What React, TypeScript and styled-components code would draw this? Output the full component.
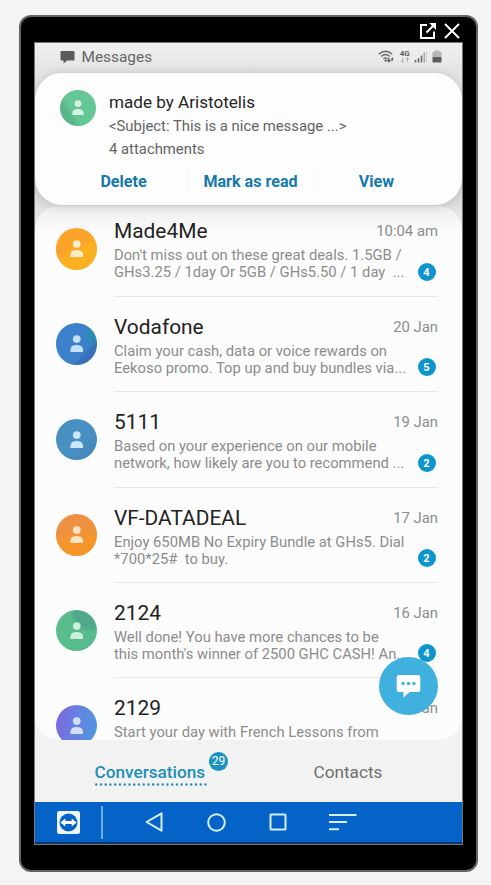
import React from 'react';
import styled, { createGlobalStyle } from 'styled-components';

const GlobalStyle = createGlobalStyle`
  *, *::before, *::after { box-sizing: border-box; }
  body {
    margin: 0;
    background: #f4f4f4;
    font-family: Roboto, "Liberation Sans", sans-serif;
    overflow: hidden;
  }
`;

const Page = styled.main`
  height: 885px;
  padding: 15px 0 0 19px;
`;

const Device = styled.div`
  display: flex;
  flex-direction: column;
  width: 459px;
  height: 857px;
  padding: 0 13px;
  background: #000;
  border: 2px solid #646464;
  border-radius: 12px;
`;

const WindowBar = styled.div`
  display: flex;
  justify-content: flex-end;
  align-items: flex-start;
  flex: none;
  height: 25px;
  padding: 5px 3px 0 0;
`;

const Screen = styled.div`
  position: relative;
  display: flex;
  flex-direction: column;
  flex: none;
  width: 429px;
  height: 803px;
  border: 1px solid #777;
  background: #f2f2f2;
`;

const StatusBar = styled.header`
  display: flex;
  align-items: center;
  flex: none;
  height: 30px;
  padding: 0 18.5px 2px 25px;
  color: #666;
  background: linear-gradient(#f1f1f1, #e4e4e4);
`;

const StatusTitle = styled.span`
  flex: 1;
  margin-left: 6.5px;
  font-size: 15.4px;
`;

const Panels = styled.div`
  flex: none;
  height: 667px;
  background: linear-gradient(#e6e6e6 0, #e0e0e0 130px, #f2f2f2 180px);
`;

const Notification = styled.section`
  position: relative;
  z-index: 1;
  height: 132px;
  padding: 17px 0 0 25px;
  border-radius: 27px;
  background: #fdfdfd;
  box-shadow: 0 1px 12px rgba(0, 0, 0, 0.18);
  clip-path: inset(-12px 0 -24px 0);
`;

const NotificationHead = styled.div`
  display: flex;
  gap: 13px;
  height: 79px;
`;

const NotificationTitle = styled.div`
  font-size: 17.1px;
  line-height: 24px;
  color: #252525;
`;

const NotificationLine = styled.div`
  padding-top: 1px;
  font-size: 14.85px;
  line-height: 22px;
  color: #646464;
`;

const Actions = styled.div`
  display: grid;
  grid-template-columns: 127px 126px 126px;
  height: 25px;
`;

const Action = styled.button`
  padding: 0;
  border: 0;
  background: none;
  color: #1479ad;
  font: 700 16.1px/25px Roboto, sans-serif;

  & + & {
    border-left: 1px solid #f7f7f7;
  }
`;

const List = styled.section`
  height: 534px;
  margin-top: 1px;
  overflow: hidden;
  border-radius: 24px;
  background: linear-gradient(#efefef 0, #fcfcfc 28px);
`;

const Row = styled.article`
  display: flex;
  height: 95.4px;
  padding: 0 24px 0 20.6px;

  &:first-child {
    margin-top: -4.6px;
  }
`;

const Avatar = styled.div<{ $size: number; $top: number; $fill: string }>`
  display: flex;
  flex: none;
  justify-content: center;
  align-items: center;
  width: ${(p) => p.$size}px;
  height: ${(p) => p.$size}px;
  margin-top: ${(p) => p.$top}px;
  border-radius: 50%;
  background: ${(p) => p.$fill};
`;

const RowContent = styled.div`
  flex: 1;
  margin-left: 16.9px;
  padding-top: 17px;
  border-bottom: 1px solid #e8e8e8;
`;

const RowHead = styled.div`
  display: flex;
  justify-content: space-between;
  height: 27px;
`;

const Sender = styled.div`
  font-size: 20.9px;
  line-height: 27px;
  color: #222;
`;

const DateText = styled.time`
  font-size: 14.85px;
  line-height: 26px;
  color: #8c8c8c;
`;

const RowBody = styled.div`
  display: flex;
  justify-content: space-between;
  margin-top: 2px;
`;

const Preview = styled.div`
  width: 300px;
  font-size: 14.79px;
  line-height: 17px;
  white-space: pre;
  color: #8c8c8c;
`;

const Count = styled.span<{ $muted?: boolean }>`
  flex: none;
  width: 18px;
  height: 18px;
  margin: 15.5px 2.5px 0 0;
  border-radius: 50%;
  background: ${(p) => (p.$muted ? '#b9b9b9' : '#0c94cd')};
  color: #fff;
  font-size: 11px;
  font-weight: 700;
  line-height: 19px;
  text-align: center;
`;

const ComposeButton = styled.button`
  position: absolute;
  right: 24px;
  bottom: 129px;
  z-index: 2;
  display: flex;
  justify-content: center;
  align-items: center;
  width: 59px;
  height: 58px;
  padding: 0;
  border: 0;
  border-radius: 50%;
  background: #40b1de;
`;

const Tabs = styled.nav`
  display: grid;
  grid-template-columns: 231px 164px;
  flex: none;
  height: 62px;
  background: #f2f2f2;
`;

const Tab = styled.div<{ $active?: boolean }>`
  display: flex;
  justify-content: center;
  padding-top: 19px;
  color: ${(p) => (p.$active ? '#218fb8' : '#707070')};
  font-size: 17.2px;
  font-weight: ${(p) => (p.$active ? 500 : 400)};
  line-height: 26px;
`;

const TabLabel = styled.span`
  position: relative;
`;

const DottedLine = styled.svg`
  display: block;
  width: 112px;
  height: 3px;
  margin-top: -2px;
`;

const TabCount = styled.span`
  position: absolute;
  top: -7px;
  left: calc(100% + 2.5px);
  width: 19px;
  height: 19px;
  border-radius: 50%;
  background: #1994bd;
  color: #fff;
  font-size: 12px;
  font-weight: 400;
  line-height: 19.5px;
  text-align: center;
`;

const NavBar = styled.footer`
  display: flex;
  align-items: center;
  flex: none;
  height: 42px;
  border-bottom: 2px solid #0c356c;
  background: #0563c7;
`;

const NavDivider = styled.i`
  width: 1.5px;
  height: 33px;
  margin: 0 42.5px 0 21px;
  background: #6fb0ec;
`;

const Icon = styled.svg<{ $gap?: number }>`
  display: block;
  flex: none;
  margin-left: ${(p) => p.$gap ?? 0}px;
`;

function Person({ color, size = 13.5 }: { color: string; size?: number }) {
  return (
    <Icon width={size} height={size * 1.3} viewBox="0 0 14 18.2" fill={color}>
      <circle cx="7" cy="4.2" r="4" />
      <path d="M.4 17.6v-1.8Q.4 10.4 7 10.4t6.6 5.4v1.8Z" />
    </Icon>
  );
}

type Message = {
  sender: string;
  date: string;
  text: string;
  count?: number;
  fill: string;
  person: string;
};

const messages: Message[] = [
  {
    sender: 'Made4Me', date: '10:04 am', count: 4, person: '#ffecc8',
    text: "Don't miss out on these great deals. 1.5GB /\nGHs3.25 / 1day Or 5GB / GHs5.50 / 1 day  ...",
    fill: 'linear-gradient(150deg, #fba32b 42%, #fbb022 56%)',
  },
  {
    sender: 'Vodafone', date: '20 Jan', count: 5, person: '#c5dff8',
    text: 'Claim your cash, data or voice rewards on\nEekoso promo. Top up and buy bundles via...',
    fill: 'radial-gradient(circle at 94% 28%, #2b8bb2 0 12%, transparent 22%), linear-gradient(135deg, #3d80cc 68%, #3770b6 76%)',
  },
  {
    sender: '5111', date: '19 Jan', count: 2, person: '#cce5fa',
    text: 'Based on your experience on our mobile\nnetwork, how likely are you to recommend ...',
    fill: 'linear-gradient(135deg, #488fc2 60%, #4385b6)',
  },
  {
    sender: 'VF-DATADEAL', date: '17 Jan', count: 2, person: '#ffe2c0',
    text: 'Enjoy 650MB No Expiry Bundle at GHs5. Dial\n*700*25#  to buy.',
    fill: 'linear-gradient(165deg, #ee9142 35%, #f6952a 65%)',
  },
  {
    sender: '2124', date: '16 Jan', count: 4, person: '#cdeedd',
    text: "Well done! You have more chances to be\nthis month's winner of 2500 GHC CASH! An...",
    fill: 'radial-gradient(circle at 80% 10%, #50a98a 0 28%, transparent 38%), linear-gradient(140deg, #58bd8b 60%, #59b491)',
  },
  {
    sender: '2129', date: '15 Jan', person: '#d3e0fc',
    text: 'Start your day with French Lessons from',
    fill: 'linear-gradient(100deg, #7c6be0 10%, #6483e0 50%, #5293e0 90%)',
  },
];

function MessageRow({ item }: { item: Message }) {
  return (
    <Row>
      <Avatar $size={41.5} $top={26.6} $fill={item.fill}>
        <Person color={item.person} />
      </Avatar>
      <RowContent>
        <RowHead>
          <Sender>{item.sender}</Sender>
          <DateText>{item.date}</DateText>
        </RowHead>
        <RowBody>
          <Preview>{item.text}</Preview>
          <Count $muted={item.count === undefined}>{item.count}</Count>
        </RowBody>
      </RowContent>
    </Row>
  );
}

function StatusIcons() {
  return (
    <Icon width="66" height="18" viewBox="0 0 66 18">
      <g fill="none" stroke="#696969" strokeWidth="1.3">
        <path d="M.8 6.2Q7.500 .2 14.300 6.200M3.200 8.500q4.300-4 8.600 0M5.400 10.900q2.200-2 4.400 0" />
      </g>
      <circle cx="7.6" cy="12.7" r="1.1" fill="#555" />
      <path d="M10.3 10v2.100H8.900l2 2.600 2-2.600h-1.400V10ZM14.500 13.300v-1.600h1.200L14.400 9.200l-1.700 2.500h.8v1.600Z" fill="#555" />
      <text x="21.700" y="8" fontSize="8" fontWeight="700" fontFamily="Roboto" fill="#5e5e5e">4G</text>
      <path d="M24.500 9.500v4.600M22.900 12.300l1.600 2 1.600-2M29.500 14.300V9.700M27.900 11.600l1.600-2 1.600 2" fill="none" stroke="#b5b5b5" />
      <path d="M37.500 14.500v-2.500M40.500 14.500V10M43.500 14.500V7.500" stroke="#666" strokeWidth="1.5" />
      <path d="M46.200 14.500V4.500" stroke="#888" strokeWidth="1.1" />
      <path d="M48.500 14.500V3.200" stroke="#cfcfcf" />
      <path d="M54.500 4h2V2.500h5V4h2v5h-9Z" fill="#b6b6b6" />
      <path d="M54.500 9h9v5.500h-9Z" fill="#5c5c5c" />
    </Icon>
  );
}

export default function App() {
  return (
    <Page>
      <GlobalStyle />
      <Device>
        <WindowBar>
          <Icon width="17" height="18" viewBox="0 0 17 18" fill="none" stroke="#fff" strokeWidth="2">
            <path d="M8 3H2v13h13V9.500M7.500 10.500l7-7" />
            <path d="M10.200 1H17v7Z" fill="#fff" stroke="none" />
          </Icon>
          <Icon $gap={8} width="16" height="18" viewBox="0 0 16 18" stroke="#fff" strokeWidth="2">
            <path d="m1 2 14 14M15 2 1 16" />
          </Icon>
        </WindowBar>
        <Screen>
          <StatusBar>
            <Icon width="15" height="14" viewBox="0 0 15 14" fill="#5b5b5b">
              <path d="M1.500 1h12q1 0 1 1v7.400q0 1-1 1H7.200L3.600 13.600v-3.200H1.500q-1 0-1-1V2q0-1 1-1Z" />
            </Icon>
            <StatusTitle>Messages</StatusTitle>
            <StatusIcons />
          </StatusBar>
          <Panels>
            <Notification>
              <NotificationHead>
                <Avatar $size={36} $top={0} $fill="linear-gradient(60deg, #57b588 26%, #65c795 38%)">
                  <Person color="#d7f5e4" size={12} />
                </Avatar>
                <div>
                  <NotificationTitle>made by Aristotelis</NotificationTitle>
                  <NotificationLine>&lt;Subject: This is a nice message ...&gt;</NotificationLine>
                  <NotificationLine>4 attachments</NotificationLine>
                </div>
              </NotificationHead>
              <Actions>
                <Action>Delete</Action>
                <Action>Mark as read</Action>
                <Action>View</Action>
              </Actions>
            </Notification>
            <List>
              {messages.map((item) => (
                <MessageRow key={item.sender} item={item} />
              ))}
            </List>
          </Panels>
          <Tabs>
            <Tab $active>
              <TabLabel>
                Conversations
                <DottedLine viewBox="0 0 112 3">
                  <path d="M1.200 1.500H111.500" stroke="#2390b8" strokeWidth="2.500" strokeLinecap="round" strokeDasharray="0 4.750" />
                </DottedLine>
                <TabCount>29</TabCount>
              </TabLabel>
            </Tab>
            <Tab>
              <TabLabel>Contacts</TabLabel>
            </Tab>
          </Tabs>
          <NavBar>
            <Icon $gap={22} width="23" height="23" viewBox="0 0 23 23">
              <rect width="23" height="23" rx="2.5" fill="#eef7ff" />
              <circle cx="11.5" cy="11.5" r="9" fill="#0563c7" />
              <path d="m3.300 11.500 5-4v2.600h6.400V7.500l5 4-5 4v-2.600H8.300v2.600Z" fill="#fff" />
            </Icon>
            <NavDivider />
            <Icon width="18" height="20" viewBox="0 0 18 20" fill="none" stroke="#d3f0ff" strokeWidth="2" strokeLinejoin="round">
              <path d="M16.500 1.300v17.400L1.600 10Z" />
            </Icon>
            <Icon $gap={43.5} width="19" height="19" viewBox="0 0 19 19" fill="none" stroke="#d3f0ff" strokeWidth="2">
              <circle cx="9.5" cy="9.5" r="8.3" />
            </Icon>
            <Icon $gap={43} width="18" height="18" viewBox="0 0 18 18" fill="none" stroke="#d3f0ff" strokeWidth="2">
              <rect x="1.5" y="1.5" width="15" height="15" rx=".6" />
            </Icon>
            <Icon $gap={41.5} width="29" height="18" viewBox="0 0 29 18" stroke="#d3f0ff" strokeWidth="2">
              <path d="M1 2h27.500M1 9h18M1 16.200h10" />
            </Icon>
          </NavBar>
          <ComposeButton aria-label="New message">
            <Icon width="25" height="24" viewBox="0 0 25 24">
              <path d="M3 1h19q2.300 0 2.300 2.300v12.400Q24.300 18 22 18h-8.500l-6 5.600V18H3Q.7 18 .7 15.700V3.300Q.7 1 3 1Z" fill="#fff" />
              <g fill="#40b1de">
                <circle cx="7" cy="9.5" r="1.7" />
                <circle cx="12.5" cy="9.5" r="1.7" />
                <circle cx="18" cy="9.5" r="1.7" />
              </g>
            </Icon>
          </ComposeButton>
        </Screen>
      </Device>
    </Page>
  );
}
